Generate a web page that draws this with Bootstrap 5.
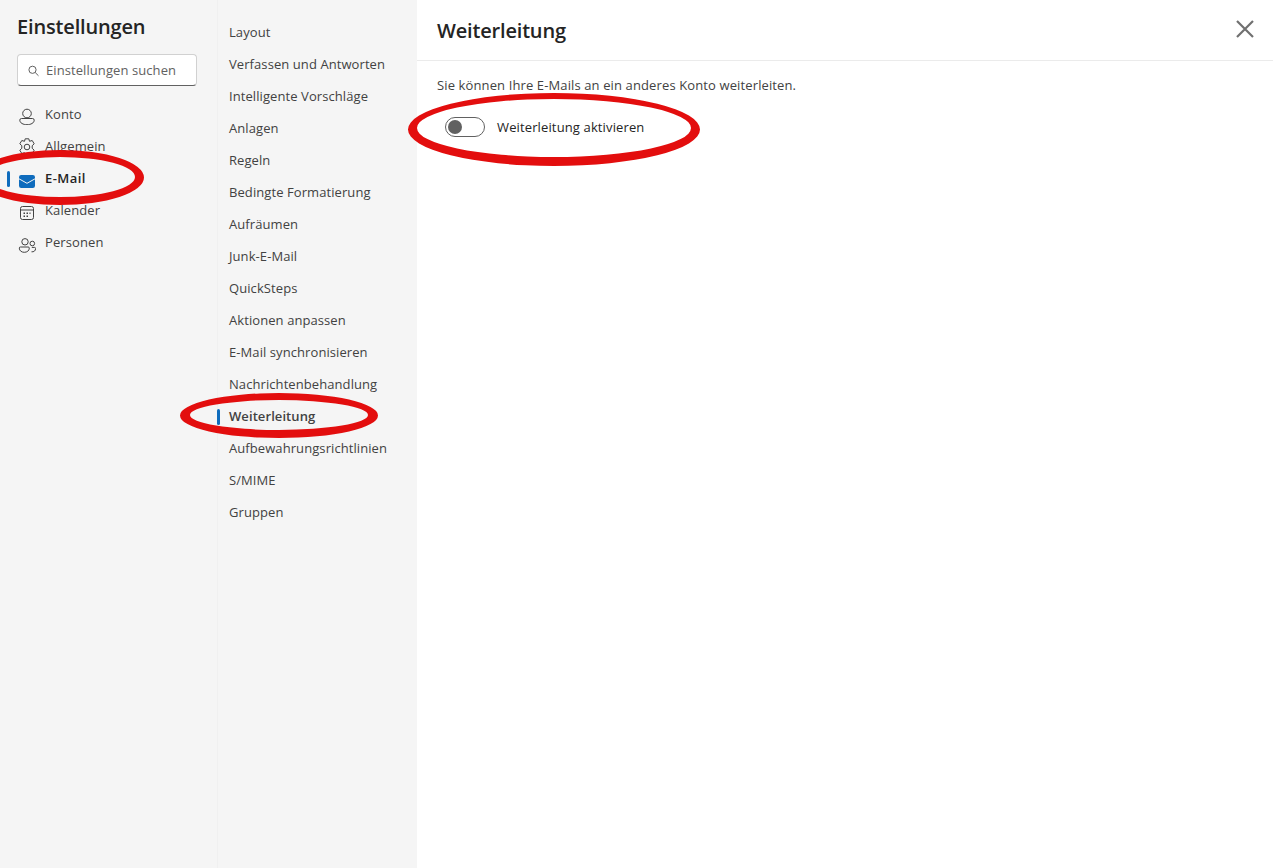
<!DOCTYPE html>
<html lang="de">
<head>
<meta charset="utf-8">
<title>Einstellungen</title>
<link href="https://cdn.jsdelivr.net/npm/bootstrap@5.3.0/dist/css/bootstrap.min.css" rel="stylesheet">
<style>
html,body{height:100%;overflow:hidden}
body{font-family:"Open Sans","Noto Sans",sans-serif;font-size:13px;color:#424242;background:#fff}
.shell{height:868px;position:relative}
.pane-one{width:217px;background:#f5f5f5;flex:none}
.pane-two{width:200px;background:#f5f5f5;border-left:1px solid #f0f0f0;flex:none;padding-top:17px}
.pane-main{flex:1;min-width:0}
.app-title{font-size:20px;font-weight:600;color:#242424;margin:0;line-height:28px;padding:13px 0 0 17px;letter-spacing:-.16px}
.search-box{margin:13px 20px 0 17px;height:32px;background:#fff;border:1px solid #d1d1d1;border-bottom-color:#616161;border-radius:4px;padding:1px 0 0 10px;gap:6px;color:#616161;font-size:13px;letter-spacing:.08px}
.cat-list{margin-top:13px}
.cat-row{height:32px;padding-left:18px;gap:9px;position:relative;color:#424242;letter-spacing:.1px}
.cat-row svg{flex:none}
.is-on{font-weight:600;color:#242424}
.cat-row.is-on{letter-spacing:.45px}
.is-on::before{content:"";position:absolute;left:7px;top:8px;width:3px;height:16px;background:#0f6cbd;border-radius:2px}
.sub-row{height:32px;padding-left:11px;position:relative;color:#424242;letter-spacing:.08px}
.sub-row.is-on::before{left:-1px}
.main-head{height:61px;border-bottom:1px solid #ebebeb;padding:2px 18px 0 20px}
.main-title{font-size:20px;font-weight:600;color:#242424;margin:0;letter-spacing:-.18px}
.main-body{padding:15px 20px}
.main-body p{margin:0;line-height:18px;letter-spacing:.12px}
.toggle-row{margin-top:23px;padding-left:8px;gap:12px;color:#242424;line-height:20px;letter-spacing:.13px}
.tgl{width:40px;height:20px;border:1px solid #616161;border-radius:10px;padding:0 2px;flex:none}
.tgl span{width:14px;height:14px;border-radius:50%;background:#616161;display:block}
.marks{position:absolute;inset:0;width:1273px;height:868px;pointer-events:none}
</style>
</head>
<body>
<div class="shell d-flex">
  <div class="pane-one">
    <h1 class="app-title">Einstellungen</h1>
    <div class="search-box d-flex align-items-center">
      <svg width="12" height="12" viewBox="0 0 12 12" fill="none" stroke="#616161" stroke-width="1"><circle cx="4.500" cy="4.800" r="3.600"/><path d="M7.200 7.500 10.500 10.800"/></svg>
      <span>Einstellungen suchen</span>
    </div>
    <div class="cat-list">
      <div class="cat-row d-flex align-items-center">
        <svg width="18" height="20" viewBox="0 0 18 20" fill="none" stroke="#424242" stroke-width="1"><circle cx="9" cy="8.500" r="4.300"/><path d="M3.500 13.500h11a1.700 1.700 0 0 1 1.700 1.700c0 2.800-3.400 4.500-7.200 4.500S1.800 18 1.800 15.200A1.700 1.700 0 0 1 3.500 13.500Z"/></svg>
        <span>Konto</span>
      </div>
      <div class="cat-row d-flex align-items-center">
        <svg width="18" height="18" viewBox="0 0 18 18" fill="none" stroke="#424242" stroke-width="1" stroke-linejoin="round"><circle cx="9" cy="9" r="2.800"/><path d="M7.200 .8h3.600l.7 2.500 2.700-.8 2 3.300-2 1.900v2.600l2 1.900-2 3.300-2.700-.8-.7 2.500H7.200l-.7-2.500-2.700.8-2-3.300 2-1.900V7.700l-2-1.900 2-3.300 2.700.8Z"/></svg>
        <span>Allgemein</span>
      </div>
      <div class="cat-row is-on d-flex align-items-center">
        <svg width="18" height="18" viewBox="0 0 18 18"><rect x="1" y="5" width="16" height="13" rx="2.200" fill="#0f6cbd"/><path d="M1 8.800 9 13.300 17 8.800" fill="none" stroke="#f5f5f5" stroke-width="1"/></svg>
        <span>E-Mail</span>
      </div>
      <div class="cat-row d-flex align-items-center">
        <svg width="18" height="18" viewBox="0 0 18 18" fill="none" stroke="#424242" stroke-width="1"><rect x="2.500" y="4.500" width="13" height="13" rx="2"/><path d="M2.500 8h13"/><path stroke-width="1.500" stroke-dasharray="1.500 1.500" d="M5.500 11.300h7M5.500 14.300h4.500"/></svg>
        <span>Kalender</span>
      </div>
      <div class="cat-row d-flex align-items-center">
        <svg width="18" height="20" viewBox="0 0 18 20" fill="none" stroke="#424242" stroke-width="1"><circle cx="7" cy="8.800" r="3.200"/><circle cx="14.300" cy="10.500" r="2.300"/><path d="M2.400 14h7.800a1.100 1.100 0 0 1 1.100 1.100c0 2.700-2.300 4.200-5 4.200S1.300 17.800 1.300 15.100A1.100 1.100 0 0 1 2.400 14ZM13.500 18.800c2.300.3 4.100-1 4.100-3.300a1.100 1.100 0 0 0-1.100-1.100H13.800"/></svg>
        <span>Personen</span>
      </div>
    </div>
  </div>
  <div class="pane-two">
    <div class="sub-row d-flex align-items-center">Layout</div>
    <div class="sub-row d-flex align-items-center">Verfassen und Antworten</div>
    <div class="sub-row d-flex align-items-center">Intelligente Vorschläge</div>
    <div class="sub-row d-flex align-items-center">Anlagen</div>
    <div class="sub-row d-flex align-items-center">Regeln</div>
    <div class="sub-row d-flex align-items-center">Bedingte Formatierung</div>
    <div class="sub-row d-flex align-items-center">Aufräumen</div>
    <div class="sub-row d-flex align-items-center">Junk-E-Mail</div>
    <div class="sub-row d-flex align-items-center">QuickSteps</div>
    <div class="sub-row d-flex align-items-center">Aktionen anpassen</div>
    <div class="sub-row d-flex align-items-center">E-Mail synchronisieren</div>
    <div class="sub-row d-flex align-items-center">Nachrichtenbehandlung</div>
    <div class="sub-row is-on d-flex align-items-center">Weiterleitung</div>
    <div class="sub-row d-flex align-items-center">Aufbewahrungsrichtlinien</div>
    <div class="sub-row d-flex align-items-center">S/MIME</div>
    <div class="sub-row d-flex align-items-center">Gruppen</div>
  </div>
  <div class="pane-main">
    <div class="main-head d-flex align-items-center justify-content-between">
      <h2 class="main-title">Weiterleitung</h2>
      <svg width="20" height="20" viewBox="0 0 20 20" stroke="#707070" stroke-width="2.200" class="mb-1"><path d="M2 2 18 18M18 2 2 18"/></svg>
    </div>
    <div class="main-body">
      <p>Sie können Ihre E-Mails an ein anderes Konto weiterleiten.</p>
      <div class="toggle-row d-flex align-items-center">
        <div class="tgl d-flex align-items-center"><span></span></div>
        <span>Weiterleitung aktivieren</span>
      </div>
    </div>
  </div>
  <svg class="marks" viewBox="0 0 1273 868" fill="#e30e0e" fill-rule="evenodd">
    <path d="M-24 177.500a84 27.500 0 1 0 168 0a84 27.500 0 1 0 -168 0ZM-15 177a75 20 0 1 0 150 0a75 20 0 1 0 -150 0Z"/>
    <path d="M180 415.500a99 22.500 0 1 0 198 0a99 22.500 0 1 0 -198 0ZM190 415a89 15 0 1 0 178 0a89 15 0 1 0 -178 0Z"/>
    <path d="M408 129.500a146 36.500 0 1 0 292 0a146 36.500 0 1 0 -292 0ZM417 128a137 29 0 1 0 274 0a137 29 0 1 0 -274 0Z"/>
  </svg>
</div>
</body>
</html>
